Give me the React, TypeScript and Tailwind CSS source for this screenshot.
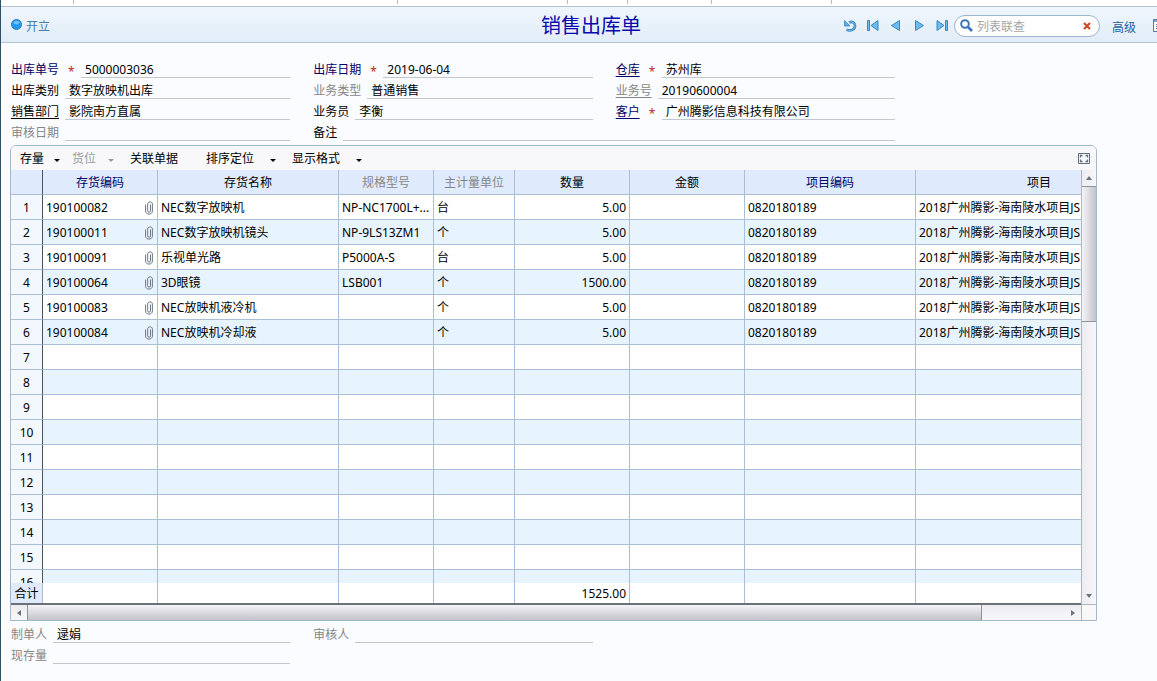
import { useId, useState } from "react";
import clsx from "clsx";

type Tone = "navy" | "black" | "gray";

const toneClass: Record<Tone, string> = {
	navy: "text-[#000066]",
	black: "text-black",
	gray: "text-[#868686]",
};

const columns: { title: string; width: string; tone: Tone }[] = [
	{ title: "存货编码", width: "w-[115px]", tone: "navy" },
	{ title: "存货名称", width: "w-[181px]", tone: "black" },
	{ title: "规格型号", width: "w-[95px]", tone: "gray" },
	{ title: "主计量单位", width: "w-[81px]", tone: "gray" },
	{ title: "数量", width: "w-[115px]", tone: "black" },
	{ title: "金额", width: "w-[115px]", tone: "black" },
	{ title: "项目编码", width: "w-[171px]", tone: "navy" },
	{ title: "项目", width: "w-auto", tone: "black" },
];

const PROJECT = { code: "0820180189", name: "2018广州腾影-海南陵水项目JS" };

const items = [
	{ code: "190100082", name: "NEC数字放映机", spec: "NP-NC1700L+...", unit: "台", qty: 5 },
	{ code: "190100011", name: "NEC数字放映机镜头", spec: "NP-9LS13ZM1", unit: "个", qty: 5 },
	{ code: "190100091", name: "乐视单光路", spec: "P5000A-S", unit: "台", qty: 5 },
	{ code: "190100064", name: "3D眼镜", spec: "LSB001", unit: "个", qty: 1500 },
	{ code: "190100083", name: "NEC放映机液冷机", spec: "", unit: "个", qty: 5 },
	{ code: "190100084", name: "NEC放映机冷却液", spec: "", unit: "个", qty: 5 },
];

const ROW_COUNT = 16;
const total = items.reduce((sum, item) => sum + item.qty, 0);

const tools = [
	{ label: "存量", className: "gap-[10px] mr-3", menu: true },
	{ label: "货位", className: "gap-3 mr-4", menu: true, disabled: true },
	{ label: "关联单据", className: "mr-7" },
	{ label: "排序定位", className: "gap-4 mr-4", menu: true },
	{ label: "显示格式", className: "gap-4", menu: true },
];

function Field({
	label,
	value = "",
	tone = "black",
	required,
	underline,
	className,
}: {
	label: string;
	value?: string;
	tone?: Tone;
	required?: boolean;
	underline?: boolean;
	className?: string;
}) {
	const id = useId();
	const [text, setText] = useState(value);

	return (
		<div className={clsx("flex h-[21px] items-stretch", className)}>
			<label
				htmlFor={id}
				className={clsx(
					"mr-[6px] flex shrink-0 items-center whitespace-nowrap pt-1",
					toneClass[tone],
				)}
			>
				<span className={clsx(underline && "underline underline-offset-2")}>{label}</span>
			</label>
			{required && (
				<span className="flex w-4 shrink-0 items-center pl-[3px] pt-2 text-xs text-[#c02818]">*</span>
			)}
			<input
				id={id}
				value={text}
				onChange={(e) => setText(e.target.value)}
				className="min-w-0 flex-1 border-b border-[#c3c6cf] bg-transparent pl-1 pt-[5px] text-black outline-none"
			/>
		</div>
	);
}

function Clip() {
	return (
		<svg width="8" height="14" viewBox="0 0 8 14" fill="none" stroke="#6f7680" aria-hidden="true">
			<path d="M5.5 3.5v6.3a1.4 1.4 0 0 1-2.8 0V2.9C2.7.2 7.4.2 7.4 2.9v7.2c0 4-6.8 4-6.8 0V3.5" />
		</svg>
	);
}

function NavIcons() {
	const button = "flex h-5 w-[23px] items-center justify-center";
	const icon = "h-[13px] w-[14px] fill-[#6bbcee] stroke-[#3b87c4]";

	return (
		<>
			<button aria-label="刷新" className={button}>
				<svg viewBox="0 0 14 13" className="h-[13px] w-[14px]" fill="none">
					<path d="M6 3.5C9 1.8 12 3.6 12 6.8c0 3.800-4 5.600-8.500 4" stroke="#3b87c4" strokeWidth="2.600" />
					<path d="M6 3.5C9 1.8 12 3.6 12 6.8c0 3.800-4 5.600-8 4.200" stroke="#6bbcee" strokeWidth="1" />
					<path d="M1.500 1.500v5.500H7z" fill="#5aaee6" stroke="#3b87c4" strokeWidth=".8" />
				</svg>
			</button>
			<button aria-label="首张" className={button}>
				<svg viewBox="0 0 14 13" className={icon}>
					<path d="M1.500 1.500h2v10h-2zM12 1.500v10L5 6.500z" />
				</svg>
			</button>
			<button aria-label="上张" className={button}>
				<svg viewBox="0 0 14 13" className={icon}>
					<path d="M10.500 1.500v10L2.500 6.500z" />
				</svg>
			</button>
			<button aria-label="下张" className={button}>
				<svg viewBox="0 0 14 13" className={icon}>
					<path d="M3.500 1.500v10l8-5z" />
				</svg>
			</button>
			<button aria-label="末张" className={button}>
				<svg viewBox="0 0 14 13" className={icon}>
					<path d="M2 1.500v10l7-5zM10.500 1.500h2v10h-2z" />
				</svg>
			</button>
		</>
	);
}

function Header() {
	return (
		<header className="grid h-[37px] grid-cols-[1fr_auto_1fr] items-center overflow-hidden border-y border-[#b4c2d6] bg-linear-to-b from-[#eff6fd] to-[#e2edf8]">
			<div className="flex items-center gap-1 pl-[10px] text-[#4a7cab]">
				<svg width="11" height="11" viewBox="0 0 11 11" aria-hidden="true">
					<circle cx="5.500" cy="5.500" r="5" fill="#2196ee" stroke="#2f7fc4" />
					<ellipse cx="5.500" cy="3.600" rx="3" ry="1.800" fill="#6cc0fa" />
				</svg>
				<span className="pt-1">开立</span>
			</div>
			<h1 className="pl-6 pt-[2px] text-xl text-[#0808ac]">销售出库单</h1>
			<div className="flex items-center justify-end pt-[2px]">
				<NavIcons />
				<div className="flex h-[22px] w-[146px] items-center rounded-full border border-[#9cb4ce] bg-white pl-[5px] pr-2">
					<svg width="13" height="13" viewBox="0 0 13 13" fill="none" stroke="#3f74b8" aria-hidden="true">
						<circle cx="5" cy="5" r="3.800" strokeWidth="2" />
						<path d="M8 8l4 4" strokeWidth="2.600" />
					</svg>
					<input
						aria-label="列表联查"
						placeholder="列表联查"
						className="min-w-0 flex-1 bg-transparent pl-1 pt-[2px] outline-none placeholder:text-[#a6a6a6]"
					/>
					<button aria-label="清除">
						<svg width="8" height="8" viewBox="0 0 8 8" stroke="#cf4a2c" strokeWidth="2.200">
							<path d="M1 1l6 6M7 1L1 7" />
						</svg>
					</button>
				</div>
				<button className="ml-3 shrink-0 pt-1 text-[#1c5fa0]">高级</button>
				<button aria-label="列表" className="-mr-[10px] ml-[17px] shrink-0">
					<svg width="14" height="13" viewBox="0 0 14 13" aria-hidden="true">
						<path d="M.5.5h13v12H.5z" fill="#fff" stroke="#5578a0" />
						<path d="M1 1h12v2H1z" fill="#7fa8d4" />
						<path d="M3 5.500h1.500M3 7.500h1.500M3 9.500h1.500M6 5.500h6M6 7.500h6M6 9.500h6" stroke="#5578a0" />
					</svg>
				</button>
			</div>
		</header>
	);
}

function Toolbar() {
	return (
		<div className="flex h-6 items-center bg-[#f8f8fa] pl-[9px] pr-[6px]">
			{tools.map((tool) => (
				<button
					key={tool.label}
					disabled={tool.disabled}
					className={clsx("flex items-center pt-px disabled:text-[#9a9a9a]", tool.className)}
				>
					{tool.label}
					{tool.menu && (
						<svg width="6" height="3" viewBox="0 0 6 3" fill="currentColor" className="mt-[3px]">
							<path d="M0 0h6L3 3z" />
						</svg>
					)}
				</button>
			))}
			<button aria-label="全屏" className="ml-auto">
				<svg width="12" height="11" viewBox="0 0 12 11" fill="none" stroke="#5f6f80">
					<path d="M.5.5h11v10H.5z" />
					<path d="M2.500 4.500v-2h2M7.500 2.500h2v2M9.500 6.500v2h-2M4.500 8.500h-2v-2" strokeWidth="1.300" />
				</svg>
			</button>
		</div>
	);
}

function Columns() {
	return (
		<colgroup>
			<col className="w-8" />
			{columns.map((col) => (
				<col key={col.title} className={col.width} />
			))}
		</colgroup>
	);
}

const tableClass = "w-full min-w-[1152px] table-fixed border-separate border-spacing-0";
const cell = "overflow-hidden whitespace-nowrap border-r border-b border-[#a9bfd8] px-[3px] pt-[2px] pb-0";
const indexCell =
	"border-r border-r-[#4a5260] border-b border-b-[#a9bfd8] px-0 pt-[2px] pb-0 text-center font-normal";

function Grid() {
	return (
		<div className="min-w-0 flex-1 overflow-hidden">
			<div className="h-[413px] overflow-hidden">
				<table className={tableClass}>
					<Columns />
					<thead>
						<tr className="h-[25px] bg-[#dfebfc]">
							<th className={indexCell} aria-label="行号" />
							{columns.map((col) => (
								<th key={col.title} className={clsx(cell, "font-normal", toneClass[col.tone])}>
									{col.title}
								</th>
							))}
						</tr>
					</thead>
					<tbody>
						{Array.from({ length: ROW_COUNT }, (_, i) => {
							const item = items[i];
							return (
								<tr key={i} className="h-[25px] bg-white even:bg-[#e8f4fd]">
									<th className={clsx(indexCell, "bg-[#f3f8fe]")}>{i + 1}</th>
									<td className={cell}>
										{item && (
											<div className="flex items-center justify-between pr-px">
												{item.code}
												<Clip />
											</div>
										)}
									</td>
									<td className={cell}>{item?.name}</td>
									<td className={cell}>{item?.spec}</td>
									<td className={cell}>{item?.unit}</td>
									<td className={clsx(cell, "text-right")}>{item?.qty.toFixed(2)}</td>
									<td className={cell} />
									<td className={cell}>{item && PROJECT.code}</td>
									<td className={cell}>{item && PROJECT.name}</td>
								</tr>
							);
						})}
					</tbody>
				</table>
			</div>
			<table className={clsx(tableClass, "border-b-2 border-[#6c7078]")}>
				<Columns />
				<tbody>
					<tr className="h-5 bg-white">
						<th className="border-r border-[#a9bfd8] bg-[#dfebfc] px-0 pt-[2px] pb-0 text-center font-normal">
							合计
						</th>
						{columns.map((col) => (
							<td
								key={col.title}
								className="border-r border-[#a9bfd8] px-[3px] pt-[2px] pb-0 text-right"
							>
								{col.title === "数量" && total.toFixed(2)}
							</td>
						))}
					</tr>
				</tbody>
			</table>
		</div>
	);
}

const arrows = {
	up: "M0 5l3-4 3 4z",
	down: "M0 1l3 4 3-4z",
	left: "M5 0L1 3l4 3z",
	right: "M1 0l4 3-4 3z",
};

function ArrowButton({ dir, label }: { dir: keyof typeof arrows; label: string }) {
	return (
		<button aria-label={label} className="flex size-4 shrink-0 items-center justify-center">
			<svg width="6" height="6" viewBox="0 0 6 6" fill="#6a7480">
				<path d={arrows[dir]} />
			</svg>
		</button>
	);
}

export default function App() {
	return (
		<div className="min-h-screen overflow-hidden border-l border-[#2f5068] bg-[#fafcff] font-['Noto_Sans','Noto_Sans_CJK_SC',sans-serif] text-xs text-black">
			<div className="flex h-[6px] bg-white">
				<div className="h-1 w-[73px] border-r border-[#b8bcc8]" />
				<div className="h-1 w-[324px] border-r border-[#b8bcc8]" />
				<div className="h-1 w-[170px] border-r border-[#b8bcc8]" />
				<div className="h-1 w-[60px] border-r border-[#b8bcc8]" />
				<div className="h-1 w-[84px] border-r border-[#b8bcc8]" />
				<div className="h-1 w-[120px] border-r border-[#b8bcc8]" />
			</div>
			<Header />

			<form className="ml-[10px] mr-[262px] grid grid-cols-3 gap-x-[23px] pt-[14px]">
				<Field label="出库单号" value="5000003036" tone="navy" required />
				<Field label="出库日期" value="2019-06-04" tone="navy" required />
				<Field label="仓库" value="苏州库" tone="navy" required underline />
				<Field label="出库类别" value="数字放映机出库" />
				<Field label="业务类型" value="普通销售" tone="gray" />
				<Field label="业务号" value="20190600004" tone="gray" underline />
				<Field label="销售部门" value="影院南方直属" underline />
				<Field label="业务员" value="李衡" />
				<Field label="客户" value="广州腾影信息科技有限公司" tone="navy" required underline />
				<Field label="审核日期" tone="gray" />
				<Field label="备注" className="col-span-2" />
			</form>

			<section className="ml-[9px] mr-[60px] mt-1 overflow-hidden rounded-t-md border border-[#a3b7cc]">
				<Toolbar />
				<div className="flex">
					<Grid />
					<div className="flex w-[15px] flex-col items-center border-b border-l border-[#b0b5be] bg-linear-to-r from-[#ececf1] to-[#f8f8fb]">
						<ArrowButton dir="up" label="向上滚动" />
						<div className="h-[136px] w-full border-y border-[#8f939c] bg-linear-to-r from-[#f5f5f8] to-[#c2c2ca]" />
						<div className="flex-1" />
						<ArrowButton dir="down" label="向下滚动" />
					</div>
				</div>
				<div className="flex h-[15px]">
					<div className="flex min-w-0 flex-1 items-center border-r border-[#b0b5be] bg-linear-to-b from-[#ececf1] to-[#f8f8fb]">
						<ArrowButton dir="left" label="向左滚动" />
						<div className="h-full flex-1">
							<div className="h-full w-[92%] border-x border-[#8f939c] bg-linear-to-b from-[#f5f5f8] to-[#c2c2ca]" />
						</div>
						<ArrowButton dir="right" label="向右滚动" />
					</div>
					<div className="w-[14px] bg-[#f8f8f8]" />
				</div>
			</section>

			<form className="ml-[10px] mr-[262px] mt-px grid grid-cols-3 gap-x-[23px]">
				<Field label="制单人" value="逯娟" tone="gray" />
				<Field label="审核人" tone="gray" />
				<Field label="现存量" tone="gray" className="col-start-1" />
			</form>
		</div>
	);
}
